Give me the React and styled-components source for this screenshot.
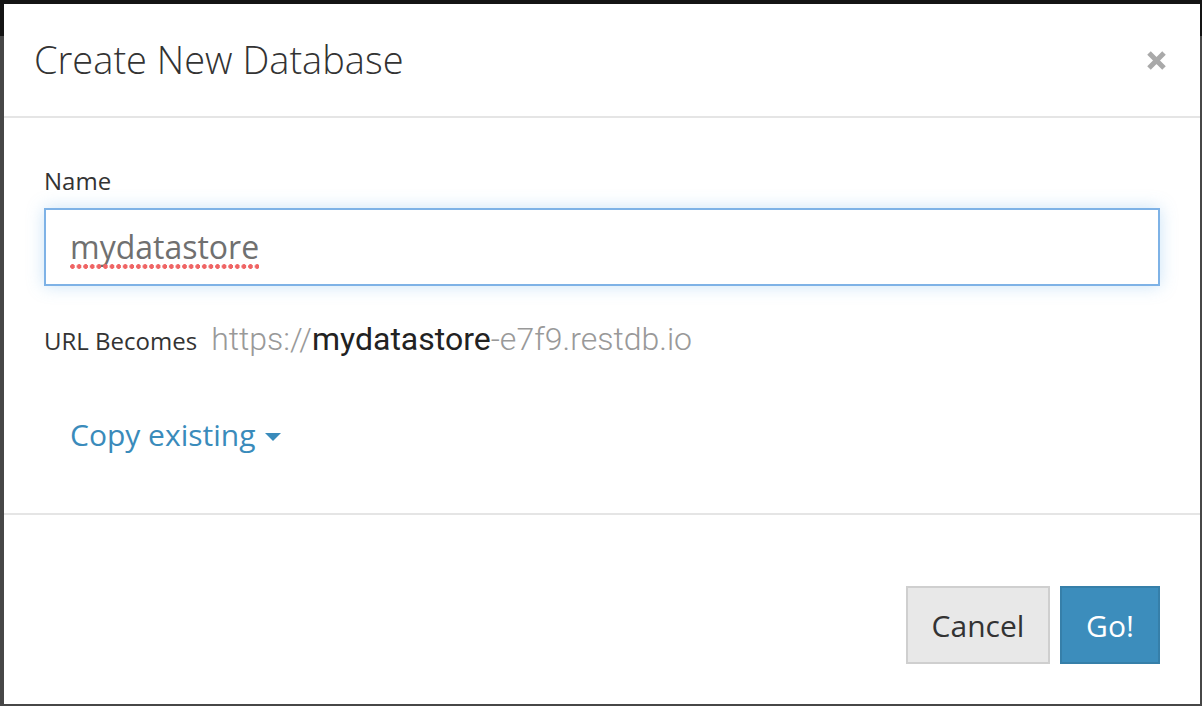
import React from "react";
import styled, { createGlobalStyle } from "styled-components";

const Global = createGlobalStyle`
  html, body { margin: 0; padding: 0; }
  body {
    width: 1202px;
    height: 706px;
    overflow: hidden;
    background: linear-gradient(#141414 0 36px, #474747 36px);
    font-family: "Open Sans", "Liberation Sans", sans-serif;
    color: #333;
  }
  * { box-sizing: border-box; }
`;

const Page = styled.div`
  padding: 4px 2px 2px 4px;
`;

const Modal = styled.div`
  width: 1196px;
  height: 700px;
  background: #fff;
  display: flex;
  flex-direction: column;
`;

const Header = styled.div`
  height: 114px;
  flex: none;
  display: flex;
  align-items: center;
  justify-content: space-between;
  padding: 0 33px 0 30px;
  border-bottom: 2px solid #e5e5e5;
`;

const Title = styled.h4`
  margin: 0;
  font-size: 38px;
  font-weight: 300;
  color: #333;
  line-height: 1.2;
`;

const Close = styled.button`
  border: 0;
  background: none;
  padding: 0;
  width: 21px;
  height: 21px;
  display: flex;
  cursor: pointer;
`;

const Body = styled.div`
  flex: 1;
  padding: 46px 40px 0 40px;
  border-bottom: 2px solid #e5e5e5;
`;

const Label = styled.label`
  display: block;
  font-size: 24px;
  line-height: 34px;
  color: #333;
  margin: 0 0 10px 0;
`;

const InputBox = styled.div`
  height: 78px;
  border: 2px solid #7eb2e6;
  box-shadow: 0 0 16px rgba(102, 175, 233, 0.35);
  display: flex;
  align-items: center;
  padding: 0 24px;
  font-size: 32px;
  color: #707070;
`;

const Misspelled = styled.span`
  position: relative;
  line-height: 1;
  &::after {
    content: "";
    position: absolute;
    left: 0;
    right: 0;
    bottom: -6px;
    height: 5px;
    background-image: radial-gradient(circle at 2.5px 2.5px, #ef6464 2.1px, transparent 2.6px);
    background-size: 6.6px 5px;
    background-repeat: repeat-x;
  }
`;

const UrlRow = styled.div`
  margin-top: 33px;
  font-size: 24px;
  line-height: 40px;
  color: #333;
  display: flex;
  align-items: baseline;
  gap: 14px;
`;

const UrlValue = styled.span`
  font-family: Roboto, "Liberation Sans", sans-serif;
  font-weight: 300;
  font-size: 32px;
  color: #999;
`;

const UrlName = styled.span`
  color: #222;
  font-weight: 400;
`;

const CopyLink = styled.button`
  margin-top: 47px;
  border: 0;
  background: none;
  padding: 6px 26px;
  font-family: "Open Sans", "Liberation Sans", sans-serif;
  font-size: 30px;
  color: #3a8bbb;
  display: flex;
  align-items: center;
  gap: 9px;
  cursor: pointer;
`;

const Caret = styled.span`
  width: 0;
  height: 0;
  border-left: 8px solid transparent;
  border-right: 8px solid transparent;
  border-top: 8px solid #3a8bbb;
  margin-top: 4px;
`;

const Footer = styled.div`
  height: 189px;
  flex: none;
  display: flex;
  justify-content: flex-end;
  align-items: flex-end;
  gap: 10px;
  padding: 0 40px 40px 0;
`;

const Button = styled.button`
  height: 78px;
  padding: 0;
  font-family: "Open Sans", "Liberation Sans", sans-serif;
  font-size: 30px;
  border: 2px solid ${(p) => (p.$primary ? "#367fa9" : "#cfcfcf")};
  background: ${(p) => (p.$primary ? "#3c8dbc" : "#e8e8e8")};
  color: ${(p) => (p.$primary ? "#fff" : "#333")};
  width: ${(p) => p.$w}px;
  cursor: pointer;
`;

export default function App() {
  return (
    <>
      <Global />
      <Page>
        <Modal>
          <Header>
            <Title>Create New Database</Title>
            <Close aria-label="Close">
              <svg width="21" height="21" viewBox="0 0 21 21">
                <path d="M3 3 L18 18 M18 3 L3 18" stroke="#a9a9a9" strokeWidth="5" strokeLinecap="butt" />
              </svg>
            </Close>
          </Header>
          <Body>
            <Label>Name</Label>
            <InputBox role="textbox">
              <Misspelled>mydatastore</Misspelled>
            </InputBox>
            <UrlRow>
              <span>URL Becomes</span>
              <UrlValue>
                https://<UrlName>mydatastore</UrlName>-e7f9.restdb.io
              </UrlValue>
            </UrlRow>
            <CopyLink>
              Copy existing <Caret />
            </CopyLink>
          </Body>
          <Footer>
            <Button $w={144}>Cancel</Button>
            <Button $w={100} $primary>Go!</Button>
          </Footer>
        </Modal>
      </Page>
    </>
  );
}
